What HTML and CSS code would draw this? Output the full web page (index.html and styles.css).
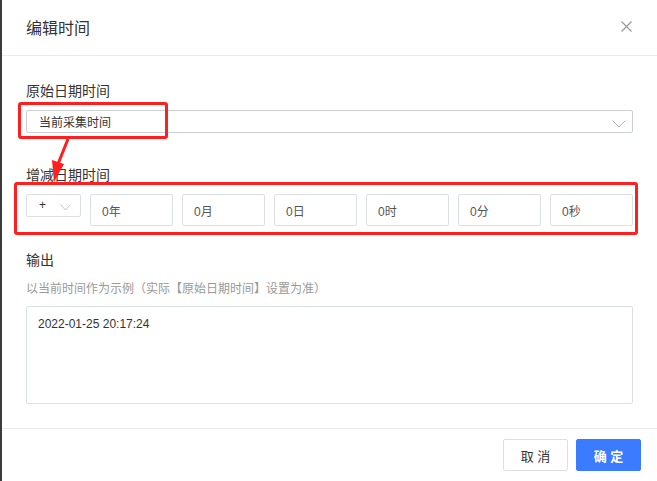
FILE: index.html
```html
<!DOCTYPE html>
<html lang="zh-CN">
<head>
  <meta charset="UTF-8">
  <title>编辑时间</title>
  <link rel="stylesheet" href="styles.css">
</head>
<body>
  <div class="page">
    <div class="edge"></div>
    <div class="dialog">
      <div class="dialog-header">
        <span class="dialog-title">编辑时间</span>
        <span class="close">
          <svg width="11" height="11" viewBox="0 0 11 11"><path d="M0.5 0.5 L10.5 10.5 M10.5 0.5 L0.5 10.5" stroke="#999" stroke-width="1.2" fill="none"/></svg>
        </span>
      </div>

      <div class="dialog-body">
        <div class="label">原始日期时间</div>
        <div class="select">
          <span>当前采集时间</span>
          <svg class="chevron" width="14" height="8" viewBox="0 0 14 8"><path d="M0.5 0.5 L7 7 L13.5 0.5" stroke="#b4b8c4" fill="none"/></svg>
        </div>

        <div class="label label-gap">增减日期时间</div>
        <div class="offset-row">
          <div class="sign-select">
            <span>+</span>
            <svg width="11" height="7" viewBox="0 0 11 7"><path d="M0.5 0.5 L5.5 6 L10.5 0.5" stroke="#c0c4cc" fill="none"/></svg>
          </div>
          <div class="num-input">0年</div>
          <div class="num-input">0月</div>
          <div class="num-input">0日</div>
          <div class="num-input">0时</div>
          <div class="num-input">0分</div>
          <div class="num-input">0秒</div>
        </div>

        <div class="label output-label">输出</div>
        <div class="hint">以当前时间作为示例（实际【原始日期时间】设置为准）</div>
        <div class="output-box">2022-01-25 20:17:24</div>

        <!-- annotations drawn over the form -->
        <div class="mark mark-source"></div>
        <div class="mark mark-offset"></div>
        <svg class="mark-arrow" width="24" height="46" viewBox="0 0 24 46">
          <path d="M20 1 L10 26" stroke="#ff1f1f" stroke-width="3" fill="none"/>
          <polygon points="4,22 16,26 6,44" fill="#ff1f1f"/>
        </svg>
      </div>

      <div class="dialog-footer">
        <button class="btn">取 消</button>
        <button class="btn btn-primary">确 定</button>
      </div>
    </div>
  </div>
</body>
</html>
```

FILE: styles.css
```css
html, body {
  margin: 0;
  padding: 0;
  height: 100%;
}

body {
  font-family: "Liberation Sans", "Noto Sans CJK SC", sans-serif;
  color: #333;
  background: #fff;
}

.page {
  display: flex;
  height: 481px;
}

.edge {
  width: 2px;
  background: #3b3b3e;
}

.dialog {
  flex: 1;
  display: flex;
  flex-direction: column;
  background: #fff;
}

.dialog-header {
  height: 55px;
  border-bottom: 1px solid #ebebeb;
  display: flex;
  align-items: center;
  justify-content: space-between;
  padding: 0 25px 0 24px;
}

.dialog-title {
  font-size: 16px;
  color: #333;
  margin-top: -2px;
}

.close {
  display: flex;
  margin-top: -2px;
}

.dialog-body {
  position: relative;
  padding: 25px 24px 24px 24px;
  border-bottom: 1px solid #ebebeb;
}

.label {
  font-size: 14px;
  line-height: 20px;
  color: #333;
  margin-bottom: 9px;
}

.label-gap {
  margin-top: 32px;
}

.select {
  height: 23px;
  border: 1px solid #cdd0da;
  border-radius: 2px;
  box-sizing: border-box;
  display: flex;
  align-items: center;
  justify-content: space-between;
  padding: 0 6px 0 12px;
  font-size: 12px;
  color: #333;
}

.chevron {
  margin-top: 4px;
}

.offset-row {
  display: flex;
  align-items: flex-start;
  gap: 9px;
}

.sign-select {
  width: 55px;
  height: 23px;
  box-sizing: border-box;
  border: 1px solid #dcdfe6;
  border-radius: 2px;
  display: flex;
  align-items: center;
  justify-content: space-between;
  padding: 0 9px 0 12px;
  font-size: 12px;
  color: #333;
}

.sign-select span {
  margin-top: -2px;
}

.sign-select svg {
  margin-top: 4px;
}

.num-input {
  flex: 1;
  height: 32px;
  box-sizing: border-box;
  border: 1px solid #dcdfe6;
  border-radius: 2px;
  display: flex;
  align-items: center;
  padding-left: 11px;
  font-size: 12px;
  color: #555;
}

.output-label {
  margin-top: 24px;
}

.hint {
  font-size: 12px;
  line-height: 20px;
  color: #999;
  margin-top: 1px;
  margin-bottom: 7px;
}

.output-box {
  height: 98px;
  box-sizing: border-box;
  border: 1px solid #dcdfe6;
  border-radius: 2px;
  padding: 9px 11px;
  font-size: 12px;
  line-height: 16px;
  color: #333;
}

.mark {
  position: absolute;
  border: 3px solid #ff1f1f;
  border-radius: 3px;
  box-sizing: border-box;
}

.mark-source {
  left: 16px;
  top: 46px;
  width: 150px;
  height: 37px;
}

.mark-offset {
  left: 12px;
  top: 126px;
  width: 624px;
  height: 53px;
}

.mark-arrow {
  position: absolute;
  left: 46px;
  top: 82px;
}

.dialog-footer {
  display: flex;
  justify-content: flex-end;
  gap: 8px;
  padding: 10px 16px 0 0;
}

.btn {
  width: 65px;
  height: 32px;
  border: 1px solid #dcdfe6;
  border-radius: 2px;
  background: #fff;
  color: #333;
  font-family: "Liberation Sans", "Noto Sans CJK SC", sans-serif;
  font-size: 13px;
  cursor: pointer;
}

.btn-primary {
  background: #3a7bff;
  border-color: #3a7bff;
  color: #fff;
  font-weight: bold;
}
```
